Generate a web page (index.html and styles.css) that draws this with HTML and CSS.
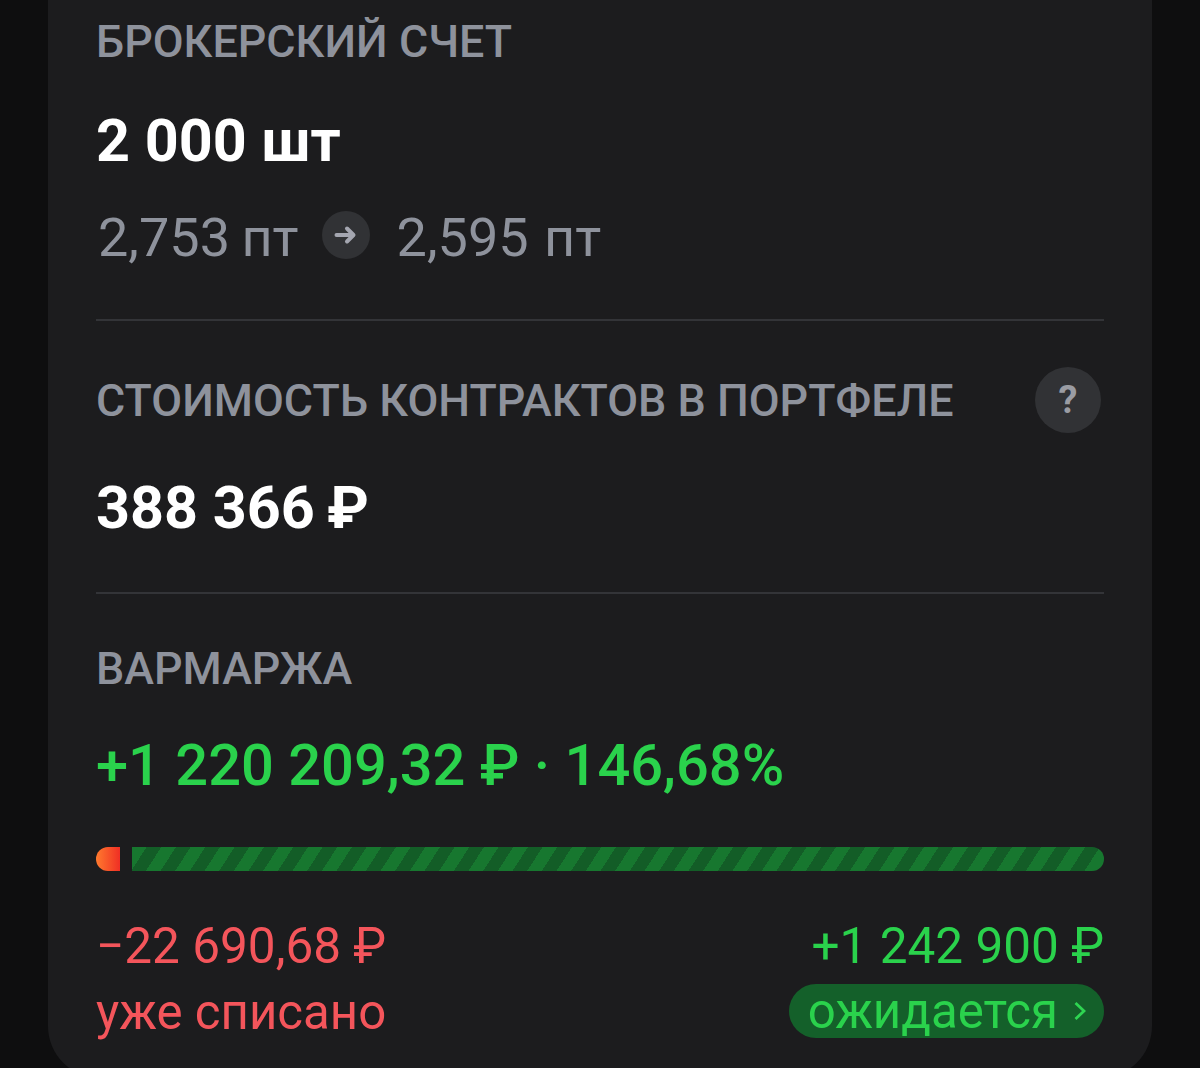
FILE: index.html
```html
<!DOCTYPE html>
<html lang="ru">
<head>
<meta charset="utf-8">
<title>Брокерский счет</title>
<link rel="stylesheet" href="styles.css">
</head>
<body>
<main class="card">
  <section class="section first">
    <h2 class="label">БРОКЕРСКИЙ СЧЕТ</h2>
    <div class="value">2 000 шт</div>
    <div class="prices">
      <span class="price-from">2,753 пт</span>
      <span class="arrow">
        <svg width="24" height="24" viewBox="0 0 24 24"><path d="M2.500 12H19M13 5.500 19.500 12 13 18.500" fill="none" stroke="#a4a6b0" stroke-width="4" stroke-linecap="round" stroke-linejoin="round"/></svg>
      </span>
      <span class="price-to">2,595 пт</span>
    </div>
  </section>
  <section class="section second">
    <div class="label-row">
      <h2 class="label">СТОИМОСТЬ КОНТРАКТОВ В ПОРТФЕЛЕ</h2>
      <span class="help">?</span>
    </div>
    <div class="value small">388 366<span class="rub">₽</span></div>
  </section>
  <section class="section third">
    <h2 class="label">ВАРМАРЖА</h2>
    <div class="margin">+1 220 209,32 ₽ · 146,68%</div>
    <div class="bar">
      <span class="bar-loss"></span>
      <span class="bar-gain"></span>
    </div>
    <div class="totals">
      <div class="total loss">
        <div class="sum">−22 690,68 ₽</div>
        <div class="caption">уже списано</div>
      </div>
      <div class="total gain">
        <div class="sum">+1 242 900 ₽</div>
        <div class="pill">ожидается
          <svg class="chevron" width="12" height="20" viewBox="0 0 12 20"><path d="M1.500 2 10 10 1.500 18" fill="none" stroke="#2fd552" stroke-width="2.800"/></svg>
        </div>
      </div>
    </div>
  </section>
</main>
</body>
</html>
```
FILE: styles.css
```css
html, body {
  margin: 0;
  height: 1068px;
  overflow: hidden;
  background: #0e0e0f;
}
body {
  font-family: Roboto, "Noto Sans", sans-serif;
  padding: 0 48px;
  box-sizing: border-box;
}
.card {
  background: #1c1c1e;
  border-radius: 0 0 52px 52px;
  padding: 0 48px;
  height: 1078px;
  box-sizing: border-box;
}
.section {
  border-bottom: 2px solid #333438;
}
.section.first { height: 321px; padding-top: 13px; box-sizing: border-box; }
.section.second { height: 273px; box-sizing: border-box; padding-top: 46px; }
.section.third { border-bottom: 0; padding-top: 46px; }
.label {
  margin: 0;
  font-size: 44.800px;
  line-height: 58px;
  font-weight: 500;
  color: #8e929c;
}
.label-row {
  display: flex;
  justify-content: space-between;
  align-items: center;
}
.label-row .label { margin-top: 2px; }
.help {
  width: 66px;
  height: 66px;
  margin-right: 3px;
  border-radius: 50%;
  background: #313235;
  color: #9a9ca3;
  font-size: 38px;
  font-weight: 700;
  display: flex;
  align-items: center;
  justify-content: center;
}
.value {
  margin-top: 30px;
  font-size: 59.300px;
  line-height: 80px;
  font-weight: 700;
  color: #fff;
}
.value.small { margin-top: 35px; }
.rub { margin-left: 12px; }
.prices {
  margin-top: 19px;
  display: flex;
  align-items: center;
  font-size: 54px;
  line-height: 76px;
  color: #8e929c;
  padding-left: 2px;
}
.price-from { word-spacing: -2px; }
.price-to { word-spacing: 2px; }
.arrow {
  width: 48px;
  height: 48px;
  margin: 0 27px 6px 23px;
  border-radius: 50%;
  background: #313235;
  display: flex;
  align-items: center;
  justify-content: center;
}
.margin {
  margin-top: 27px;
  font-size: 57.800px;
  line-height: 80px;
  font-weight: 500;
  color: #2ad24c;
}
.bar {
  margin-top: 42px;
  display: flex;
  gap: 12px;
  height: 24px;
}
.bar-loss {
  width: 24px;
  border-radius: 12px 0 0 12px;
  background: linear-gradient(90deg, #ff7a2e, #f02f24);
}
.bar-gain {
  flex: 1;
  border-radius: 0 12px 12px 0;
  background: repeating-linear-gradient(123deg, #17772f 0 12.300px, #135d27 12.300px 24.600px);
}
.totals {
  margin-top: 46px;
  display: flex;
  justify-content: space-between;
}
.total { display: flex; flex-direction: column; }
.total.gain { align-items: flex-end; }
.sum {
  font-size: 49.500px;
  line-height: 58px;
}
.caption, .pill {
  font-size: 49.200px;
}
.total.loss { color: #f4555b; }
.total.gain { color: #2ad24c; }
.caption { margin-top: 8px; line-height: 58px; }
.pill {
  margin-top: 9px;
  height: 54px;
  line-height: 54px;
  border-radius: 27px;
  padding: 0 18px 0 19px;
  background: #14602a;
  display: flex;
  align-items: center;
  gap: 16px;
}
.chevron { flex: none; }
```
